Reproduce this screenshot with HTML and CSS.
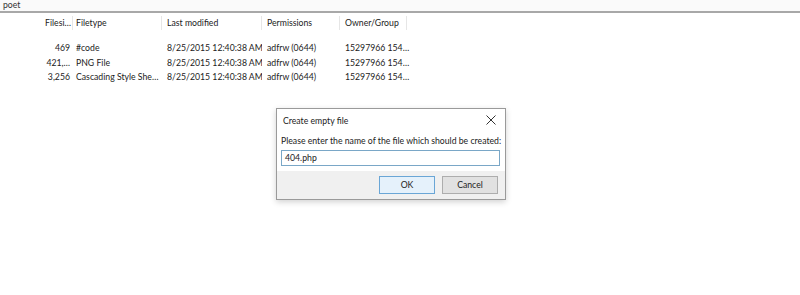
FILE: index.html
```html
<!DOCTYPE html>
<html>
<head>
<meta charset="utf-8">
<link rel="stylesheet" href="styles.css">
</head>
<body>
<div class="top">poet</div>
<div class="sep"></div>
<div class="list">
  <div class="row head">
    <div class="c size">Filesi…</div>
    <div class="c type">Filetype</div>
    <div class="c mod">Last modified</div>
    <div class="c perm">Permissions</div>
    <div class="c own">Owner/Group</div>
  </div>
  <div class="rows">
    <div class="row">
      <div class="c size">469</div>
      <div class="c type">#code</div>
      <div class="c mod">8/25/2015 12:40:38 AM</div>
      <div class="c perm">adfrw (0644)</div>
      <div class="c own">15297966 154…</div>
    </div>
    <div class="row">
      <div class="c size">421,…</div>
      <div class="c type">PNG File</div>
      <div class="c mod">8/25/2015 12:40:38 AM</div>
      <div class="c perm">adfrw (0644)</div>
      <div class="c own">15297966 154…</div>
    </div>
    <div class="row">
      <div class="c size">3,256</div>
      <div class="c type">Cascading Style She…</div>
      <div class="c mod">8/25/2015 12:40:38 AM</div>
      <div class="c perm">adfrw (0644)</div>
      <div class="c own">15297966 154…</div>
    </div>
  </div>
</div>
<div class="dialog">
  <div class="title">
    <span>Create empty file</span>
    <svg class="x" width="10" height="10" viewBox="0 0 10 10"><path d="M0.5 0.5L9.5 9.5M9.5 0.5L0.5 9.5" stroke="#333" stroke-width="1"/></svg>
  </div>
  <div class="body">
    <div class="label">Please enter the name of the file which should be created:</div>
    <div class="input">404.php</div>
  </div>
  <div class="foot">
    <div class="btn ok">OK</div>
    <div class="btn">Cancel</div>
  </div>
</div>
</body>
</html>
```
FILE: styles.css
```css
html, body { margin: 0; padding: 0; background: #fff; }
body {
  width: 800px; height: 295px; overflow: hidden; position: relative;
  font-family: Lato, "Open Sans", sans-serif;
  font-size: 8.7px; color: #222;
}
.top { height: 11px; line-height: 9px; padding-left: 3px; color: #333; overflow: hidden; background: #fafafa; }
.sep { height: 2px; background: #a8a8a8; }
.row { display: flex; height: 14.5px; line-height: 14.5px; white-space: nowrap; }
.head { height: 17px; line-height: 14px; padding-top: 3px; box-sizing: border-box; }
.head .c { border-right: 1px solid #e6e6e6; }
.c { overflow: hidden; box-sizing: border-box; }
.size { width: 73px; text-align: right; padding-right: 3px; }
.head .size { padding-right: 1px; }
.type { width: 89px; padding-left: 3px; }
.mod { width: 100px; padding-left: 5px; }
.perm { width: 78px; padding-left: 5px; }
.own { width: 67px; padding-left: 5px; }
.rows .own { overflow: visible; }
.rows { padding-top: 11px; }
.dialog {
  position: absolute; left: 276px; top: 108px; width: 230px; height: 92px;
  box-sizing: border-box; border: 1px solid #9a9a9a; background: #fff;
  box-shadow: 0 2px 6px rgba(0,0,0,0.18);
  display: flex; flex-direction: column;
}
.title { height: 22px; flex: none; display: flex; align-items: center; justify-content: space-between; padding: 0 9px 0 6px; }
.body { padding: 4px 4px 0 4px; }
.label { line-height: 12px; white-space: nowrap; }
.input {
  margin-top: 3px; height: 16px; box-sizing: border-box; border: 1px solid #7aa7c7;
  line-height: 14px; padding-left: 3px; width: 219px;
}
.foot {
  margin-top: 5px; flex: 1; background: #f0f0f0; display: flex; justify-content: flex-end;
  align-items: flex-start; gap: 7px; padding: 5px 7px 0 0;
}
.btn {
  width: 56px; height: 18px; box-sizing: border-box; border: 1px solid #adadad;
  background: #e1e1e1; text-align: center; line-height: 16px;
}
.ok { border-color: #6aa6d6; background: #e5f1fb; }
```
